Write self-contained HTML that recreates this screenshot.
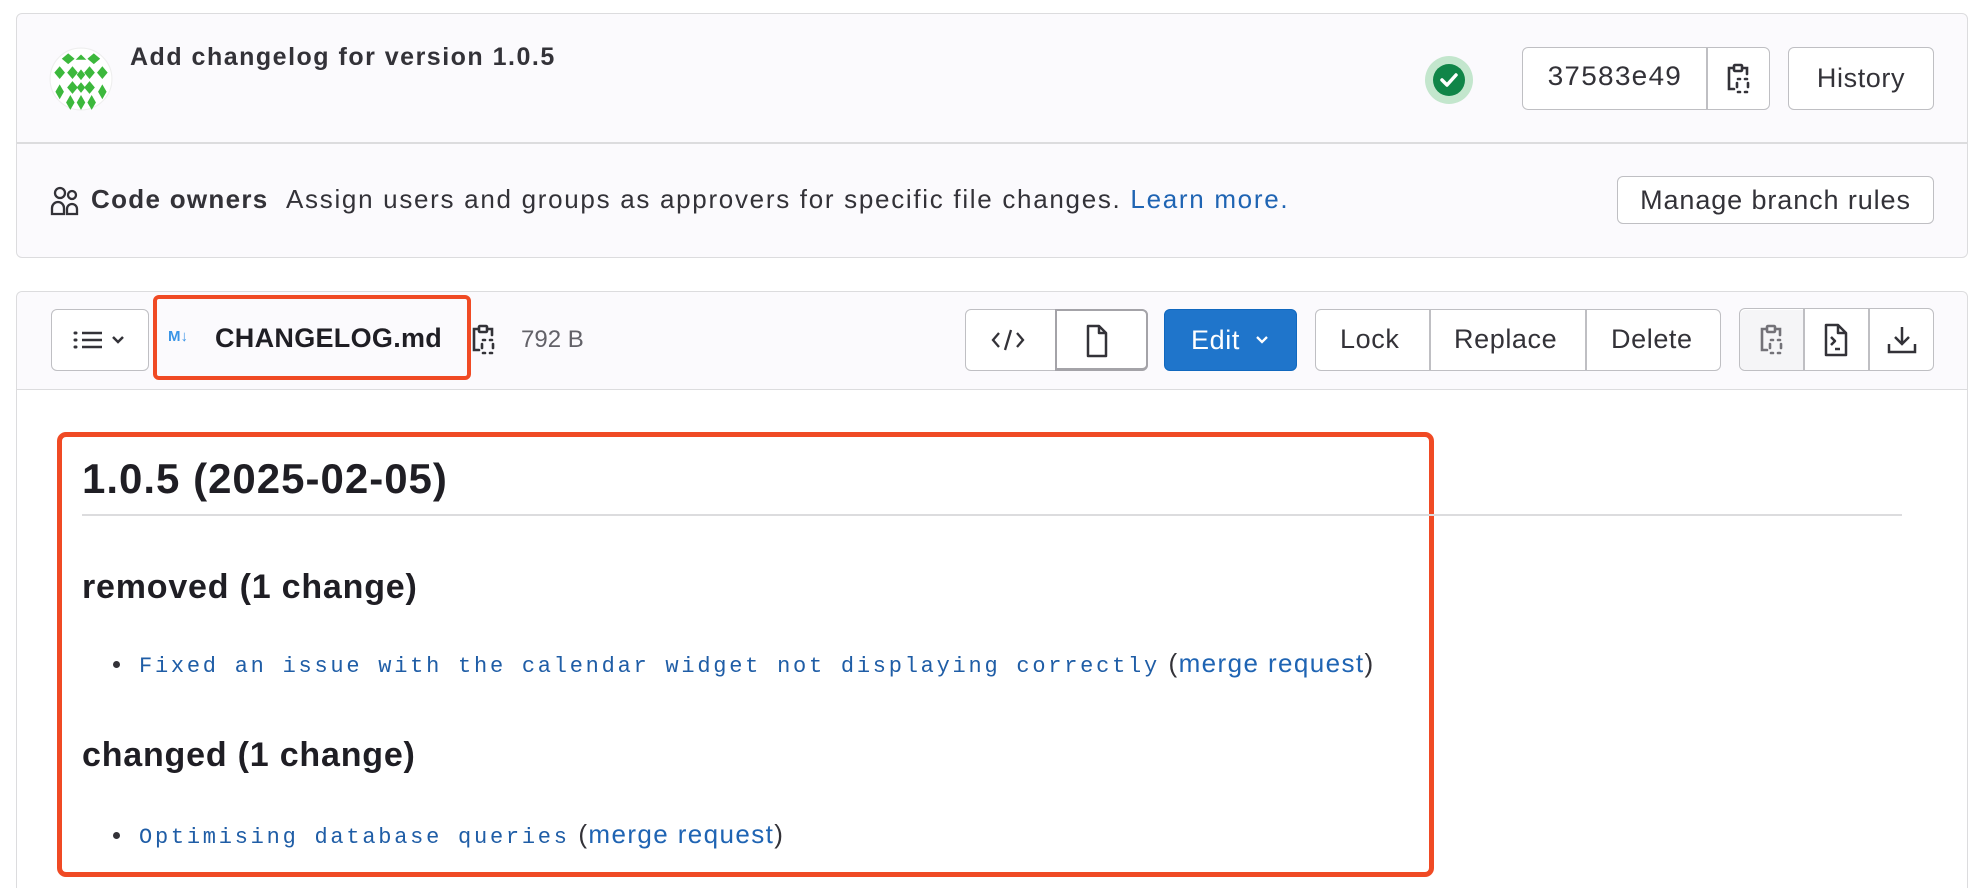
<!DOCTYPE html>
<html><head><meta charset="utf-8"><style>
*{box-sizing:border-box;margin:0;padding:0}
html,body{width:1986px;height:888px;overflow:hidden}
body{background:#fff;font-family:"Liberation Sans",sans-serif;color:#333238;position:relative}
.abs{position:absolute}
.card{position:absolute;border:1.5px solid #dcdcde;border-radius:6px;background:#fbfafd}
.btn{position:absolute;border:1.5px solid #bfbfc3;border-radius:6px;background:#fff;display:flex;align-items:center;justify-content:center;font-size:27px;letter-spacing:0.6px;color:#333238}
.t{position:absolute;white-space:nowrap}
.mono{font-family:"Liberation Mono",monospace;color:#1f5da6;font-size:22px;letter-spacing:2.75px}
.link{color:#1f64b3}
.bt{position:absolute;white-space:nowrap;font-size:27px;letter-spacing:0.6px}
</style></head><body>

<div class="card" style="left:16px;top:13px;width:1952px;height:245px"></div>
<div class="abs" style="left:17px;top:142px;width:1950px;height:1.5px;background:#dcdcde"></div>

<svg class="abs" style="left:49px;top:47px" width="64" height="64" viewBox="0 0 60 60">
<circle cx="30" cy="30" r="29" fill="#fff" stroke="#eee"/>
<g fill="#3cb83c">
<path d="M18 6l6 5-6 5-6-5zM42 6l6 5-6 5-6-5zM30 7l5 5h-10zM5 24l5-6 5 6-5 6zM55 24l-5-6-5 6 5 6zM22 18l5 6-5 6-5-6zM38 18l5 6-5 6-5-6zM30 21l4 5-4 5-4-5zM22 32l5 6-5 6-5-6zM38 32l5 6-5 6-5-6zM30 33l4 5-4 5-4-5zM10 35l4 7-4 7-4-7zM50 35l4 7-4 7-4-7zM20 45l4 7-4 7-4-7zM40 45l4 7-4 7-4-7zM30 45l4 7-4 7-4-7z"/>
</g></svg>
<div class="t" style="left:130px;top:43px;font-size:25px;letter-spacing:1.5px;font-weight:bold;color:#333238">Add changelog for version 1.0.5</div>

<svg class="abs" style="left:1424px;top:55px" width="50" height="50" viewBox="0 0 50 50">
<circle cx="25" cy="25" r="24" fill="#c3e6cd"/><circle cx="25" cy="25" r="16" fill="#108548"/>
<path d="M18 25l5 5 9-10" stroke="#fff" stroke-width="3.5" fill="none" stroke-linecap="round" stroke-linejoin="round"/></svg>

<div class="btn" style="left:1522px;top:47px;width:248px;height:63px;justify-content:flex-start;padding-left:24px;font-family:'Liberation Mono',monospace;font-size:28px;letter-spacing:0">37583e49</div>
<div class="abs" style="left:1706px;top:47px;width:1.5px;height:63px;background:#bfbfc3"></div>
<svg class="abs" style="left:1724px;top:62px" width="28" height="34" viewBox="0 0 28 34" fill="none" stroke="#333238" stroke-width="2.6" stroke-linecap="round"><path d="M9 6h-4v21h5"/><rect x="10" y="3" width="8" height="6" rx="1"/><path d="M19 6h4v6"/><path d="M14 17h2M21 17h2M14 30h2M21 30h2M13 21v4M24 21v4"/></svg>
<div class="btn" style="left:1788px;top:47px;width:146px;height:63px">History</div>

<svg class="abs" style="left:50px;top:185px" width="32" height="32" viewBox="0 0 32 32" fill="none" stroke="#333238" stroke-width="2.3"><circle cx="10" cy="8" r="5"/><circle cx="22" cy="10" r="4"/><path d="M2 29v-6a6 6 0 0 1 12 0v6zM17 29v-5a5 5 0 0 1 10 0v5z"/></svg>
<div class="t" style="left:91px;top:184px;font-size:26px;letter-spacing:1.3px;font-weight:bold">Code owners</div>
<div class="t" style="left:286px;top:184px;font-size:26px;letter-spacing:1.7px">Assign users and groups as approvers for specific file changes. <span class="link">Learn more.</span></div>
<div class="btn" style="left:1617px;top:176px;width:317px;height:48px;font-size:27px;letter-spacing:0.9px">Manage branch rules</div>

<div class="card" style="left:16px;top:291px;width:1952px;height:597px;background:#fff;border-bottom:none;border-radius:6px 6px 0 0"></div>
<div class="abs" style="left:17px;top:292px;width:1950px;height:98px;background:#fbfafd;border-bottom:1.5px solid #dcdcde;border-radius:6px 6px 0 0"></div>

<div class="btn" style="left:51px;top:309px;width:98px;height:62px"><svg width="60" height="30" viewBox="0 0 60 30" fill="none" stroke="#333238" stroke-width="2.5"><path d="M12 8h20M12 15h20M12 22h20"/><path d="M5 8h1M5 15h1M5 22h1" stroke-linecap="round" stroke-width="3"/><path d="M43 12l5 5 5-5"/></svg></div>
<div class="abs" style="left:153px;top:295px;width:318px;height:85px;border:4px solid #f04a24;border-radius:6px"></div>
<div class="t" style="left:168px;top:328px;font-size:15px;font-weight:bold;color:#3b95e6">M↓</div>
<div class="t" style="left:215px;top:323px;font-size:27px;letter-spacing:0.3px;font-weight:bold;color:#1f1e24">CHANGELOG.md</div>
<svg class="abs" style="left:469px;top:323px" width="28" height="34" viewBox="0 0 28 34" fill="none" stroke="#333238" stroke-width="2.6" stroke-linecap="round"><path d="M9 6h-4v21h5"/><rect x="10" y="3" width="8" height="6" rx="1"/><path d="M19 6h4v6"/><path d="M14 17h2M21 17h2M14 30h2M21 30h2M13 21v4M24 21v4"/></svg>
<div class="t" style="left:521px;top:326px;font-size:24px;color:#626168">792 B</div>

<div class="btn" style="left:965px;top:309px;width:183px;height:62px"></div>
<div class="abs" style="left:1055px;top:309px;width:93px;height:62px;border:2px solid #a4a3a8;border-bottom-width:3px;border-radius:0 6px 6px 0;background:#fff"></div>
<svg class="abs" style="left:990px;top:327px" width="36" height="26" viewBox="0 0 36 26" fill="none" stroke="#333238" stroke-width="2.3"><path d="M9 6l-6 7 6 7M27 6l6 7-6 7M21 3l-6 20"/></svg>
<svg class="abs" style="left:1084px;top:324px" width="26" height="34" viewBox="0 0 26 34" fill="none" stroke="#333238" stroke-width="2.5" stroke-linejoin="round"><path d="M4 2h11l7 7v23h-18z M15 2v7h7"/></svg>
<div class="btn" style="left:1164px;top:309px;width:133px;height:62px;background:#1f75cb;border-color:#1068bf;color:#fff;justify-content:flex-start;padding-left:26px">Edit<svg style="margin-left:14px" width="16" height="12" viewBox="0 0 16 12" fill="none" stroke="#fff" stroke-width="2.3"><path d="M3 3l5 5 5-5"/></svg></div>

<div class="btn" style="left:1315px;top:309px;width:406px;height:62px"></div>
<div class="abs" style="left:1429px;top:309px;width:1.5px;height:62px;background:#bfbfc3"></div>
<div class="abs" style="left:1585px;top:309px;width:1.5px;height:62px;background:#bfbfc3"></div>
<div class="bt" style="left:1340px;top:324px">Lock</div>
<div class="bt" style="left:1454px;top:324px">Replace</div>
<div class="bt" style="left:1611px;top:324px">Delete</div>

<div class="btn" style="left:1739px;top:308px;width:195px;height:63px"></div>
<div class="abs" style="left:1740px;top:310px;width:63px;height:60px;background:#f5f5f7;border-radius:6px 0 0 6px"></div>
<div class="abs" style="left:1803px;top:308px;width:1.5px;height:63px;background:#bfbfc3"></div>
<div class="abs" style="left:1868px;top:308px;width:1.5px;height:63px;background:#bfbfc3"></div>
<svg class="abs" style="left:1757px;top:323px" width="28" height="34" viewBox="0 0 28 34" fill="none" stroke="#737278" stroke-width="2.6" stroke-linecap="round"><path d="M9 6h-4v21h5"/><rect x="10" y="3" width="8" height="6" rx="1"/><path d="M19 6h4v6"/><path d="M14 17h2M21 17h2M14 30h2M21 30h2M13 21v4M24 21v4"/></svg>
<svg class="abs" style="left:1823px;top:323px" width="26" height="34" viewBox="0 0 26 34" fill="none" stroke="#333238" stroke-width="2.5" stroke-linejoin="round"><path d="M3 2h12l8 8v22h-20z M15 2v8h8"/><path d="M8 14l4 4-4 4M12 26h5"/></svg>
<svg class="abs" style="left:1886px;top:324px" width="32" height="32" viewBox="0 0 32 32" fill="none" stroke="#333238" stroke-width="2.5"><path d="M16 3v17M9 13l7 7 7-7M3 20v8h26v-8"/></svg>

<div class="abs" style="left:57px;top:432px;width:1377px;height:445px;border:5px solid #f04a24;border-radius:9px"></div>
<div class="t" style="left:82px;top:455px;font-size:42px;font-weight:bold;color:#1f1e24;letter-spacing:1px">1.0.5 (2025-02-05)</div>
<div class="abs" style="left:82px;top:514px;width:1820px;height:1.5px;background:#dcdcde"></div>
<div class="t" style="left:82px;top:568px;font-size:34px;font-weight:bold;color:#1f1e24;letter-spacing:0.8px">removed (1 change)</div>
<div class="abs" style="left:113px;top:661px;width:7px;height:7px;border-radius:50%;background:#333238"></div>
<div class="t" style="left:139px;top:648px;font-size:26px;letter-spacing:1.4px"><span class="mono">Fixed an issue with the calendar widget not displaying correctly</span> (<span class="link">merge request</span>)</div>
<div class="t" style="left:82px;top:736px;font-size:34px;font-weight:bold;color:#1f1e24;letter-spacing:0.8px">changed (1 change)</div>
<div class="abs" style="left:113px;top:832px;width:7px;height:7px;border-radius:50%;background:#333238"></div>
<div class="t" style="left:139px;top:819px;font-size:26px;letter-spacing:1.4px"><span class="mono">Optimising database queries</span> (<span class="link">merge request</span>)</div>
</body></html>
